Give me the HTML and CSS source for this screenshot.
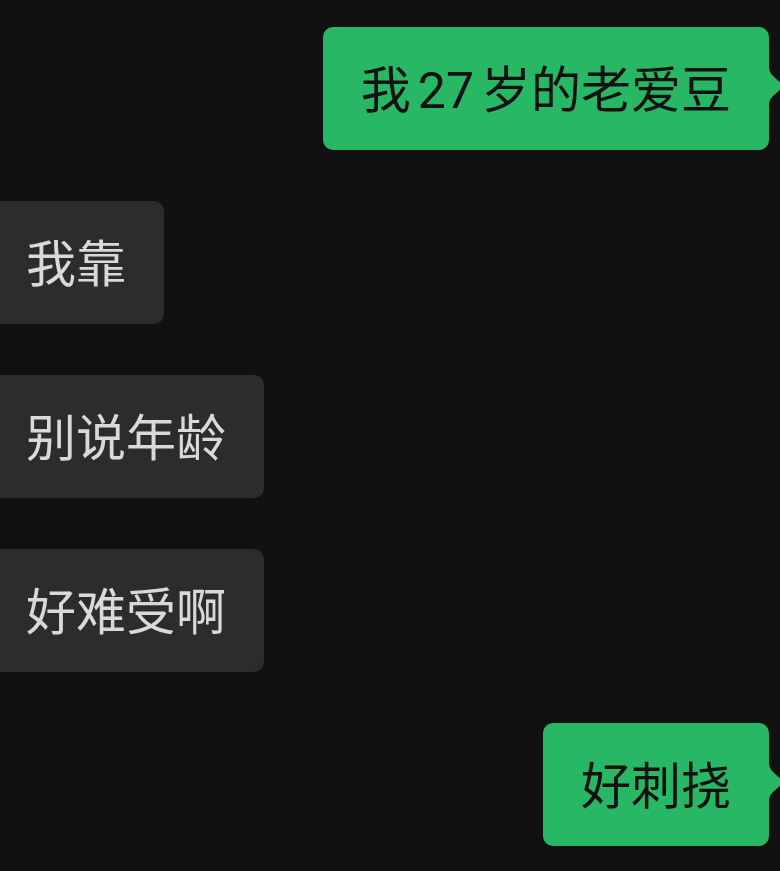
FILE: index.html
```html
<!DOCTYPE html>
<html lang="zh-CN">
<head>
    <meta charset="UTF-8">
    <meta name="viewport" content="width=device-width, initial-scale=1.0">
    <title>聊天</title>
    <link rel="stylesheet" href="styles.css">
</head>
<body>
    <div class="chat">
        <div class="row mine">
            <div class="bubble">我<span class="num">27</span>岁的老爱豆
                <svg class="tail" viewBox="0 0 16 38" width="16" height="38"><path d="M0 0 C0 4 2 7 4 9 L13 17 Q15 19 13 21 L4 29 C2 31 0 34 0 38 Z"/></svg>
            </div>
        </div>
        <div class="row theirs">
            <div class="bubble">我靠</div>
        </div>
        <div class="row theirs">
            <div class="bubble">别说年龄</div>
        </div>
        <div class="row theirs">
            <div class="bubble">好难受啊</div>
        </div>
        <div class="row mine">
            <div class="bubble">好刺挠
                <svg class="tail" viewBox="0 0 16 38" width="16" height="38"><path d="M0 0 C0 4 2 7 4 9 L13 17 Q15 19 13 21 L4 29 C2 31 0 34 0 38 Z"/></svg>
            </div>
        </div>
    </div>
</body>
</html>
```

FILE: styles.css
```css
/* 聊天页面 */
body {
    margin: 0;
    background: #111111;
    font-family: "Noto Sans CJK SC", "Noto Sans", sans-serif;
    overflow: hidden;
}

.chat {
    display: flex;
    flex-direction: column;
    gap: 51px;
    padding: 27px 11px 0 0;
}

.row {
    display: flex;
}

.row.mine {
    justify-content: flex-end;
}

.bubble {
    position: relative;
    height: 60px;
    font-size: 50px;
    line-height: 60px;
    padding: 29px 38px 34px;
    border-radius: 10px;
    white-space: nowrap;
}

.mine .bubble {
    background: #28b764;
    color: #111111;
}

.theirs .bubble {
    background: #2c2c2c;
    color: #d9d9d9;
    margin-left: -12px;
}

.num {
    font-family: Roboto, sans-serif;
    line-height: 1;
    margin: 0 7px;
}

/* 气泡小尾巴 */
.tail {
    position: absolute;
    top: 40px;
    left: 100%;
    display: block;
}

.tail path {
    fill: #28b764;
}
```
